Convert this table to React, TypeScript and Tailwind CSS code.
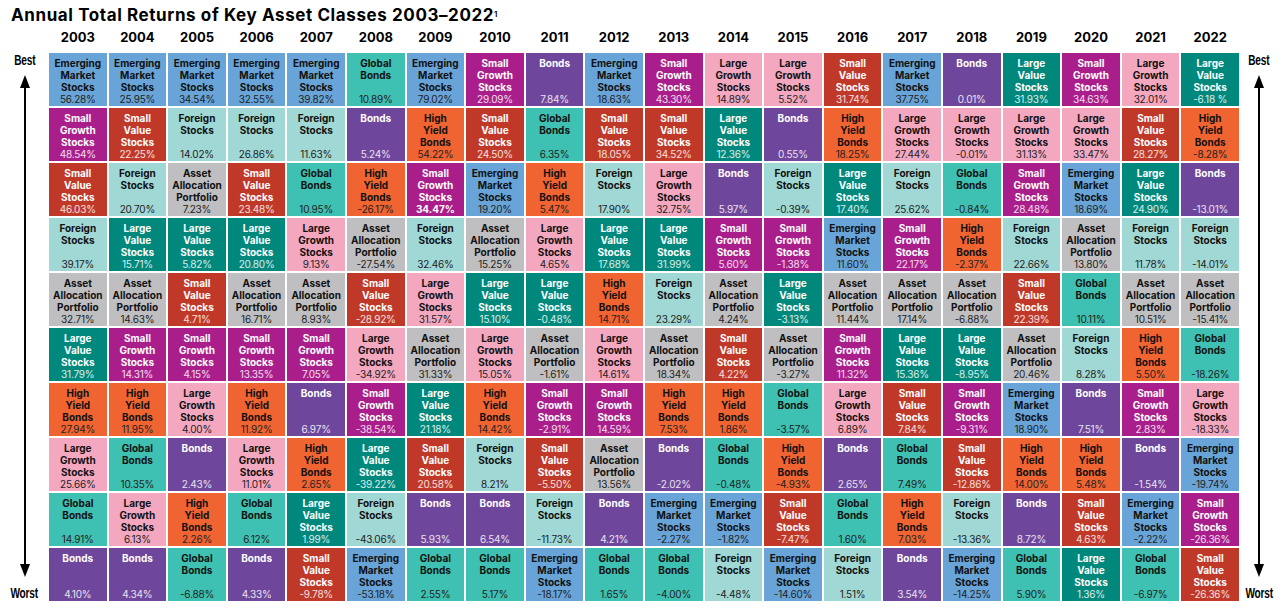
import React from "react"

type Key = "EM" | "SG" | "SV" | "FS" | "AA" | "LV" | "LG" | "HY" | "GB" | "BD"

const assets: Record<Key, { lines: string[]; cls: string; pct: string }> = {
  EM: { lines: ["Emerging", "Market", "Stocks"], cls: "bg-[#68a4d8] text-[#111]", pct: "text-[#222]" },
  SG: { lines: ["Small", "Growth", "Stocks"], cls: "bg-[#aa1e8c] text-white", pct: "text-white/85" },
  SV: { lines: ["Small", "Value", "Stocks"], cls: "bg-[#c03828] text-white", pct: "text-white/85" },
  FS: { lines: ["Foreign", "Stocks"], cls: "bg-[#a0d8d6] text-[#111]", pct: "text-[#222]" },
  AA: { lines: ["Asset", "Allocation", "Portfolio"], cls: "bg-[#bfbfc1] text-[#111]", pct: "text-[#222]" },
  LV: { lines: ["Large", "Value", "Stocks"], cls: "bg-[#00887c] text-white", pct: "text-white/85" },
  LG: { lines: ["Large", "Growth", "Stocks"], cls: "bg-[#f4a8c0] text-[#111]", pct: "text-[#222]" },
  HY: { lines: ["High", "Yield", "Bonds"], cls: "bg-[#f06432] text-[#111]", pct: "text-[#222]" },
  GB: { lines: ["Global", "Bonds"], cls: "bg-[#3ec0b2] text-[#111]", pct: "text-[#222]" },
  BD: { lines: ["Bonds"], cls: "bg-[#6e469b] text-white", pct: "text-white/85" },
}

const years: { year: number; cells: [Key, string][] }[] = [
  { year: 2003, cells: [["EM", "56.28%"], ["SG", "48.54%"], ["SV", "46.03%"], ["FS", "39.17%"], ["AA", "32.71%"], ["LV", "31.79%"], ["HY", "27.94%"], ["LG", "25.66%"], ["GB", "14.91%"], ["BD", "4.10%"]] },
  { year: 2004, cells: [["EM", "25.95%"], ["SV", "22.25%"], ["FS", "20.70%"], ["LV", "15.71%"], ["AA", "14.63%"], ["SG", "14.31%"], ["HY", "11.95%"], ["GB", "10.35%"], ["LG", "6.13%"], ["BD", "4.34%"]] },
  { year: 2005, cells: [["EM", "34.54%"], ["FS", "14.02%"], ["AA", "7.23%"], ["LV", "5.82%"], ["SV", "4.71%"], ["SG", "4.15%"], ["LG", "4.00%"], ["BD", "2.43%"], ["HY", "2.26%"], ["GB", "-6.88%"]] },
  { year: 2006, cells: [["EM", "32.55%"], ["FS", "26.86%"], ["SV", "23.48%"], ["LV", "20.80%"], ["AA", "16.71%"], ["SG", "13.35%"], ["HY", "11.92%"], ["LG", "11.01%"], ["GB", "6.12%"], ["BD", "4.33%"]] },
  { year: 2007, cells: [["EM", "39.82%"], ["FS", "11.63%"], ["GB", "10.95%"], ["LG", "9.13%"], ["AA", "8.93%"], ["SG", "7.05%"], ["BD", "6.97%"], ["HY", "2.65%"], ["LV", "1.99%"], ["SV", "-9.78%"]] },
  { year: 2008, cells: [["GB", "10.89%"], ["BD", "5.24%"], ["HY", "-26.17%"], ["AA", "-27.54%"], ["SV", "-28.92%"], ["LG", "-34.92%"], ["SG", "-38.54%"], ["LV", "-39.22%"], ["FS", "-43.06%"], ["EM", "-53.18%"]] },
  { year: 2009, cells: [["EM", "79.02%"], ["HY", "54.22%"], ["SG", "34.47%"], ["FS", "32.46%"], ["LG", "31.57%"], ["AA", "31.33%"], ["LV", "21.18%"], ["SV", "20.58%"], ["BD", "5.93%"], ["GB", "2.55%"]] },
  { year: 2010, cells: [["SG", "29.09%"], ["SV", "24.50%"], ["EM", "19.20%"], ["AA", "15.25%"], ["LV", "15.10%"], ["LG", "15.05%"], ["HY", "14.42%"], ["FS", "8.21%"], ["BD", "6.54%"], ["GB", "5.17%"]] },
  { year: 2011, cells: [["BD", "7.84%"], ["GB", "6.35%"], ["HY", "5.47%"], ["LG", "4.65%"], ["LV", "-0.48%"], ["AA", "-1.61%"], ["SG", "-2.91%"], ["SV", "-5.50%"], ["FS", "-11.73%"], ["EM", "-18.17%"]] },
  { year: 2012, cells: [["EM", "18.63%"], ["SV", "18.05%"], ["FS", "17.90%"], ["LV", "17.68%"], ["HY", "14.71%"], ["LG", "14.61%"], ["SG", "14.59%"], ["AA", "13.56%"], ["BD", "4.21%"], ["GB", "1.65%"]] },
  { year: 2013, cells: [["SG", "43.30%"], ["SV", "34.52%"], ["LG", "32.75%"], ["LV", "31.99%"], ["FS", "23.29%"], ["AA", "18.34%"], ["HY", "7.53%"], ["BD", "-2.02%"], ["EM", "-2.27%"], ["GB", "-4.00%"]] },
  { year: 2014, cells: [["LG", "14.89%"], ["LV", "12.36%"], ["BD", "5.97%"], ["SG", "5.60%"], ["AA", "4.24%"], ["SV", "4.22%"], ["HY", "1.86%"], ["GB", "-0.48%"], ["EM", "-1.82%"], ["FS", "-4.48%"]] },
  { year: 2015, cells: [["LG", "5.52%"], ["BD", "0.55%"], ["FS", "-0.39%"], ["SG", "-1.38%"], ["LV", "-3.13%"], ["AA", "-3.27%"], ["GB", "-3.57%"], ["HY", "-4.93%"], ["SV", "-7.47%"], ["EM", "-14.60%"]] },
  { year: 2016, cells: [["SV", "31.74%"], ["HY", "18.25%"], ["LV", "17.40%"], ["EM", "11.60%"], ["AA", "11.44%"], ["SG", "11.32%"], ["LG", "6.89%"], ["BD", "2.65%"], ["GB", "1.60%"], ["FS", "1.51%"]] },
  { year: 2017, cells: [["EM", "37.75%"], ["LG", "27.44%"], ["FS", "25.62%"], ["SG", "22.17%"], ["AA", "17.14%"], ["LV", "15.36%"], ["SV", "7.84%"], ["GB", "7.49%"], ["HY", "7.03%"], ["BD", "3.54%"]] },
  { year: 2018, cells: [["BD", "0.01%"], ["LG", "-0.01%"], ["GB", "-0.84%"], ["HY", "-2.37%"], ["AA", "-6.88%"], ["LV", "-8.95%"], ["SG", "-9.31%"], ["SV", "-12.86%"], ["FS", "-13.36%"], ["EM", "-14.25%"]] },
  { year: 2019, cells: [["LV", "31.93%"], ["LG", "31.13%"], ["SG", "28.48%"], ["FS", "22.66%"], ["SV", "22.39%"], ["AA", "20.46%"], ["EM", "18.90%"], ["HY", "14.00%"], ["BD", "8.72%"], ["GB", "5.90%"]] },
  { year: 2020, cells: [["SG", "34.63%"], ["LG", "33.47%"], ["EM", "18.69%"], ["AA", "13.80%"], ["GB", "10.11%"], ["FS", "8.28%"], ["BD", "7.51%"], ["HY", "5.48%"], ["SV", "4.63%"], ["LV", "1.36%"]] },
  { year: 2021, cells: [["LG", "32.01%"], ["SV", "28.27%"], ["LV", "24.90%"], ["FS", "11.78%"], ["AA", "10.51%"], ["HY", "5.50%"], ["SG", "2.83%"], ["BD", "-1.54%"], ["EM", "-2.22%"], ["GB", "-6.97%"]] },
  { year: 2022, cells: [["LV", "-6.18 %"], ["HY", "-8.28%"], ["BD", "-13.01%"], ["FS", "-14.01%"], ["AA", "-15.41%"], ["GB", "-18.26%"], ["LG", "-18.33%"], ["EM", "-19.74%"], ["SG", "-26.36%"], ["SV", "-26.36%"]] },
]

function Arrow() {
  return (
    <div className="flex-1 flex flex-col items-center mt-[8px] mb-[9px]">
      <svg width="10" height="13" viewBox="0 0 10 13" className="shrink-0">
        <polygon points="5,0 10,13 0,13" fill="#000" />
      </svg>
      <div className="flex-1 w-[2px] bg-black" />
      <svg width="10" height="13" viewBox="0 0 10 13" className="shrink-0">
        <polygon points="0,0 10,0 5,13" fill="#000" />
      </svg>
    </div>
  )
}

function Side({ right }: { right?: boolean }) {
  return (
    <div className={right ? "flex-1 h-[557px] flex flex-col items-center pr-[3px] pb-[10px]" : "w-[49px] h-[557px] flex flex-col items-center pb-[10px]"}>
      <span className="h-[14px] leading-[14px] text-[14px] font-bold font-['Liberation_Sans'] scale-x-[0.72] tracking-[-0.2px]">Best</span>
      <Arrow />
      <span className="h-[14px] leading-[14px] text-[14px] font-bold font-['Liberation_Sans'] scale-x-[0.72] tracking-[-0.2px]">Worst</span>
    </div>
  )
}

export default function App() {
  // build rows from columns so the grid flows row by row
  const rows = Array.from({ length: 10 }, (_, r) => years.map((y) => ({ year: y.year, cell: y.cells[r] })))

  return (
    <div className="w-[1282px] h-[610px] bg-white text-black font-['Inter',sans-serif] overflow-hidden">
      <h1 className="h-[28px] pl-[11px] pt-[5px] text-[17px] leading-[20px] font-bold tracking-[0.6px]">
        Annual Total Returns of Key Asset Classes 2003–2022<sup className="text-[8px] font-semibold">1</sup>
      </h1>
      <div className="flex">
        <div className="w-[49px]" />
        <div className="w-[1190px] grid grid-cols-20 gap-x-[2px] h-[25px] pt-[1px]">
          {years.map((y) => (
            <div key={y.year} className="text-center text-[13px] leading-[16px] font-bold">{y.year}</div>
          ))}
        </div>
      </div>
      <div className="flex">
        <Side />
        <div className="w-[1190px] h-[548px] grid grid-cols-20 grid-rows-10 gap-[2px] self-start">
          {rows.flat().map(({ year, cell }) => {
            const a = assets[cell[0]]
            const bold = year === 2009 && cell[0] === "SG"
            return (
              <div
                key={year + cell[0]}
                className={`${a.cls} flex flex-col justify-between items-center text-center pt-[4px] pb-[1px] text-[10px] leading-[12px]`}
              >
                <div className="font-bold">
                  {a.lines.map((l) => (
                    <div key={l}>{l}</div>
                  ))}
                </div>
                <div className={bold ? "font-bold text-white" : `${a.pct} tracking-[-0.2px]`}>{cell[1]}</div>
              </div>
            )
          })}
        </div>
        <Side right />
      </div>
    </div>
  )
}
